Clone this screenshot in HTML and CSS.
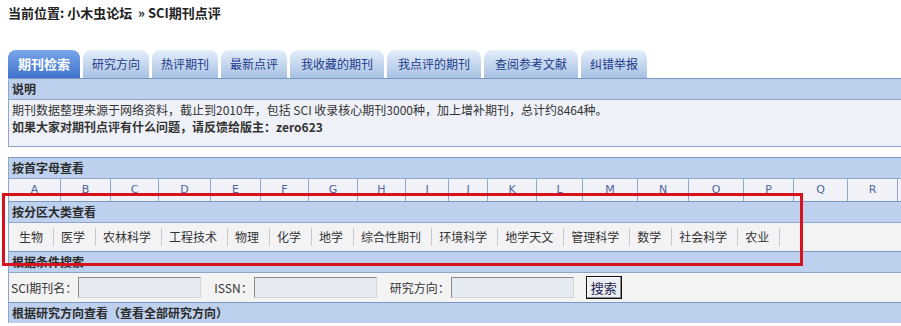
FILE: index.html
```html
<!DOCTYPE html>
<html lang="zh-CN">

<head>
    <meta charset="UTF-8">
    <meta name="viewport" content="width=device-width, initial-scale=1.0">
    <title>SCI期刊点评 - 小木虫论坛</title>
    <link rel="stylesheet" href="styles.css">
</head>

<body>

    <!-- breadcrumb -->
    <div class="crumb">当前位置: 小木虫论坛 &nbsp;» SCI期刊点评</div>

    <!-- tabs -->
    <ul class="tabs">
        <li class="tab active">期刊检索</li>
        <li class="tab">研究方向</li>
        <li class="tab">热评期刊</li>
        <li class="tab">最新点评</li>
        <li class="tab wide">我收藏的期刊</li>
        <li class="tab wide">我点评的期刊</li>
        <li class="tab wide">查阅参考文献</li>
        <li class="tab">纠错举报</li>
    </ul>

    <div class="panel">
        <div class="bar">说明</div>
        <div class="intro">
            期刊数据整理来源于网络资料，截止到2010年，包括 SCI 收录核心期刊3000种，加上增补期刊，总计约8464种。<br>
            <b>如果大家对期刊点评有什么问题，请反馈给版主：zero623</b>
        </div>
    </div>

    <div class="panel second">
        <div class="bar">按首字母查看</div>
        <div class="letters">
            <a>A</a><a>B</a><a>C</a><a>D</a><a>E</a><a>F</a><a>G</a><a>H</a><a>I</a>
            <a>J</a><a>K</a><a>L</a><a>M</a><a>N</a><a>O</a><a>P</a><a>Q</a><a>R</a>
            <a></a>
        </div>

        <div class="bar">按分区大类查看</div>
        <div class="cats">
            <a>生物</a><a>医学</a><a>农林科学</a><a>工程技术</a><a>物理</a><a>化学</a><a>地学</a>
            <a>综合性期刊</a><a>环境科学</a><a>地学天文</a><a>管理科学</a><a>数学</a><a>社会科学</a><a>农业</a>
        </div>

        <div class="bar">根据条件搜索</div>
        <form class="search">
            <label>SCI期刊名：</label><input type="text">
            <label class="gap">ISSN：</label><input type="text">
            <label class="gap">研究方向：</label><input type="text">
            <button type="button">搜索</button>
        </form>

        <div class="bar">根据研究方向查看（查看全部研究方向）</div>
    </div>

    <!-- red highlight drawn over the page -->
    <div class="mark"></div>

</body>

</html>
```

FILE: styles.css
```css
body {
    margin: 0;
    padding: 0 8px;
    font-family: "Noto Sans CJK SC", "Liberation Sans", sans-serif;
    font-size: 12px;
    color: #333;
    overflow: hidden;
}

.crumb {
    height: 26px;
    line-height: 26px;
    font-size: 13px;
    font-weight: bold;
    color: #222;
}

.tabs {
    display: flex;
    gap: 3px;
    list-style: none;
    margin: 24px 0 0;
    padding: 0;
    height: 28px;
}

.tab {
    height: 28px;
    line-height: 28px;
    padding: 0 9px;
    border-radius: 8px 8px 0 0;
    background: linear-gradient(#e4eefa, #a7c1e3);
    color: #1d3a8a;
    white-space: nowrap;
}

.tab.wide {
    padding: 0 11px;
}

.tab.active {
    padding: 0 10px;
    background: linear-gradient(#78a5ea, #3f72cc);
    color: #fff;
    font-size: 13px;
    font-weight: bold;
}

.panel {
    width: 1000px;
    border-left: 1px solid #8ea6c9;
}

.second {
    margin-top: 10px;
}

.bar {
    height: 20px;
    line-height: 20px;
    padding-left: 3px;
    background: #bdd0ed;
    border-top: 1px solid #7c97c2;
    font-weight: bold;
    color: #2b2b2b;
}

.intro {
    padding: 1px 3px 11px;
    line-height: 17px;
    background: #eff1f8;
    border-top: 1px solid #8ea6c9;
    border-bottom: 1px solid #8ea6c9;
}

.letters {
    display: grid;
    grid-template-columns: 52px 50px 48px 52px 50px 48px 49px 48px 43px 39px 49px 46px 55px 51px 55px 50px 54px 50px 50px;
    height: 22px;
    background: #f1f2f7;
    border-top: 1px solid #8ea6c9;
}

.letters a {
    line-height: 22px;
    text-align: center;
    border-right: 1px solid #8ea6c9;
    font-family: "DejaVu Sans", sans-serif;
    font-size: 11px;
    color: #50669c;
}

.cats {
    display: flex;
    align-items: center;
    height: 28px;
    padding-left: 3px;
    background: #f3f3f6;
    border-top: 1px solid #8ea6c9;
}

.cats a {
    padding: 0 10px 0 7px;
    line-height: 18px;
    border-right: 1px solid #c9c9cc;
    color: #333;
    white-space: nowrap;
}

.search {
    display: flex;
    align-items: center;
    height: 29px;
    margin: 0;
    padding-left: 2px;
    background: #f3f3f4;
    border-top: 1px solid #8ea6c9;
}

.search label.gap {
    margin-left: 13px;
}

.search input {
    box-sizing: border-box;
    width: 123px;
    height: 21px;
    margin: 0 0 0 1px;
    padding: 0;
    background: #e6ebf2;
    border: 1px solid;
    border-color: #8a8a8a #d6d6d6 #d6d6d6 #8a8a8a;
}

.search button {
    box-sizing: border-box;
    width: 36px;
    height: 23px;
    margin-left: 12px;
    padding: 0;
    background: #eceef2;
    border: 1px solid #111;
    box-shadow: inset -1px -1px 0 #888, inset 1px 1px 0 #fff;
    font-family: "Noto Sans CJK SC", sans-serif;
    font-size: 13px;
    color: #1c2450;
    cursor: pointer;
}

.mark {
    position: absolute;
    left: 2px;
    top: 193px;
    width: 801px;
    height: 73px;
    box-sizing: border-box;
    border: 3px solid #d8121c;
}
```
